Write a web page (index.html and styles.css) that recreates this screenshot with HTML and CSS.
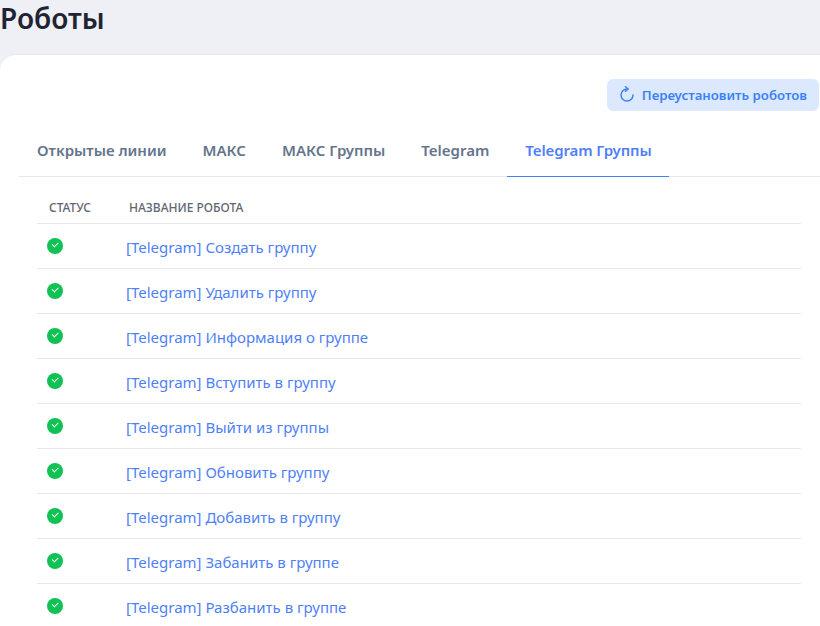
FILE: index.html
```html
<!DOCTYPE html>
<html lang="ru">
  <head>
    <meta charset="UTF-8" />
    <title>Роботы</title>
    <link rel="stylesheet" href="styles.css">
  </head>
  <body>
    <h1 class="page-title">Роботы</h1>
    <div class="card">
      <div class="toolbar">
        <button class="btn-reinstall" type="button">
          <svg class="btn-icon" viewBox="0 0 24 24" fill="none" stroke="currentColor" stroke-width="2" stroke-linecap="round" stroke-linejoin="round">
            <path d="M20 12a8 8 0 1 1-8-8h1" />
            <path d="M10 1l3.5 3L10 7" />
          </svg>
          Переустановить роботов
        </button>
      </div>
      <div class="tabs">
        <a class="tab">Открытые линии</a>
        <a class="tab">МАКС</a>
        <a class="tab">МАКС Группы</a>
        <a class="tab">Telegram</a>
        <a class="tab active">Telegram Группы</a>
      </div>
      <table class="robots">
        <thead>
          <tr><th class="col-status">Статус</th><th>Название робота</th></tr>
        </thead>
        <tbody>
          <tr><td><span class="status-ok"></span></td><td><a>[Telegram] Создать группу</a></td></tr>
          <tr><td><span class="status-ok"></span></td><td><a>[Telegram] Удалить группу</a></td></tr>
          <tr><td><span class="status-ok"></span></td><td><a>[Telegram] Информация о группе</a></td></tr>
          <tr><td><span class="status-ok"></span></td><td><a>[Telegram] Вступить в группу</a></td></tr>
          <tr><td><span class="status-ok"></span></td><td><a>[Telegram] Выйти из группы</a></td></tr>
          <tr><td><span class="status-ok"></span></td><td><a>[Telegram] Обновить группу</a></td></tr>
          <tr><td><span class="status-ok"></span></td><td><a>[Telegram] Добавить в группу</a></td></tr>
          <tr><td><span class="status-ok"></span></td><td><a>[Telegram] Забанить в группе</a></td></tr>
          <tr><td><span class="status-ok"></span></td><td><a>[Telegram] Разбанить в группе</a></td></tr>
        </tbody>
      </table>
    </div>
  </body>
</html>
```

FILE: styles.css
```css
html,
body {
  height: 626px;
  overflow: hidden;
}

body {
  margin: 0;
  font-family: "Noto Sans", sans-serif;
  background: #eff0f5;
  color: #1f2433;
}

.page-title {
  margin: 0;
  height: 54px;
  font-size: 28px;
  line-height: 36px;
  font-weight: 600;
}

.card {
  box-sizing: border-box;
  background: white;
  border-top: 1px solid #e5e7eb;
  border-radius: 16px 0 0 0;
  padding: 24px 0 0 19px;
  height: 572px;
  overflow: hidden;
}

.toolbar {
  display: flex;
  justify-content: flex-end;
  padding-right: 1px;
}

.btn-reinstall {
  display: flex;
  align-items: center;
  gap: 6px;
  height: 32px;
  padding: 0 12px 0 11px;
  border: none;
  border-radius: 6px;
  background: #dbe8fe;
  color: #3b82f6;
  font-family: inherit;
  font-size: 13.2px;
  font-weight: 600;
}

.btn-icon {
  width: 18px;
  height: 18px;
}

.tabs {
  display: flex;
  margin-top: 16px;
  border-bottom: 1px solid #e5e7eb;
}

.tab {
  padding: 0 18px;
  height: 49px;
  line-height: 47px;
  font-size: 15px;
  font-weight: 600;
  color: #64748b;
}

.tab.active {
  color: #4f7ff7;
  border-bottom: 1px solid #3b82f6;
  margin-bottom: -1px;
  padding-right: 17px;
  letter-spacing: -0.12px;
}

.robots {
  table-layout: fixed;
  width: 764px;
  margin: 13px 0 0 18px;
  border-collapse: collapse;
}

.robots th {
  box-sizing: border-box;
  height: 33px;
  padding: 2px 0 0 3px;
  text-align: left;
  font-size: 12px;
  font-weight: 500;
  text-transform: uppercase;
  color: #5f6672;
  border-bottom: 1px solid #e5e7eb;
}

.robots th.col-status {
  width: 89px;
  padding-left: 12px;
}

.robots td {
  box-sizing: border-box;
  height: 45px;
  padding: 2px 0 0;
  border-bottom: 1px solid #e5e7eb;
  font-size: 15px;
}

.robots a {
  color: #4f7ff7;
}

.status-ok {
  display: block;
  position: relative;
  width: 16px;
  height: 16px;
  margin: -2px 0 0 10px;
  border-radius: 50%;
  background: #10c254;
}

.status-ok::after {
  content: "";
  position: absolute;
  left: 5px;
  top: 4px;
  width: 5px;
  height: 2.5px;
  border-left: 1.5px solid white;
  border-bottom: 1.5px solid white;
  transform: rotate(-45deg);
}
```
